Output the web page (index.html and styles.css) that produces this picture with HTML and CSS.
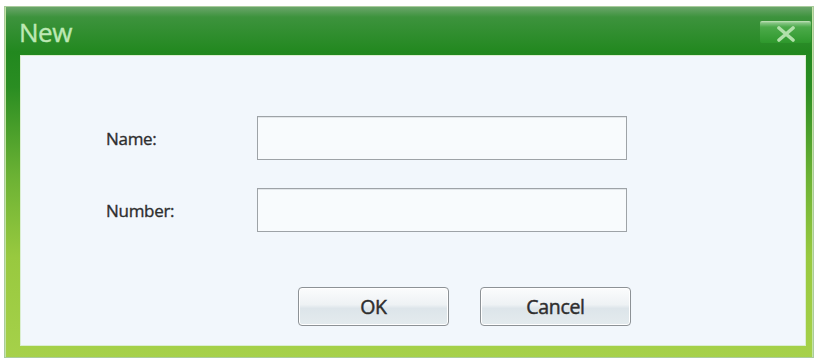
FILE: index.html
```html
<!DOCTYPE html>
<html>
<head>
<meta charset="utf-8">
<link rel="stylesheet" href="styles.css">
</head>
<body>
<div class="window">
  <div class="titlebar">
    <span class="title">New</span>
    <button class="close" aria-label="Close">
      <svg width="22" height="16" viewBox="0 0 22 16"><path d="M4 2 L18 14 M18 2 L4 14" stroke="#b2e0aa" stroke-width="3.6" stroke-linecap="round"/></svg>
    </button>
  </div>
  <div class="panel">
    <div class="form">
      <label class="label">Name:</label>
      <div class="field"></div>
      <label class="label">Number:</label>
      <div class="field"></div>
    </div>
    <div class="actions">
      <button class="btn">OK</button>
      <button class="btn">Cancel</button>
    </div>
  </div>
</div>
</body>
</html>
```
FILE: styles.css
```css
html, body {
  margin: 0;
  padding: 0;
  background: #ffffff;
}
body {
  padding: 6px 0 0 4px;
  font-family: "Open Sans", "Noto Sans", sans-serif;
}
.window {
  width: 810px;
  height: 352px;
  box-sizing: border-box;
  display: flex;
  flex-direction: column;
  padding: 0 7px 11px 15px;
  border: 1px solid #a9cc9c;
  background: linear-gradient(to bottom, #6aa56a 0px, #3d933d 10px, #22881f 45px, #2a8d22 80px, #6cb234 170px, #98c93f 250px, #a6d14a 352px);
  box-shadow: inset 1px 0 0 #c5e3a6, inset -1px 0 0 #c5e3a6;
}
.titlebar {
  height: 48px;
  flex: none;
  display: flex;
  align-items: flex-start;
  justify-content: space-between;
  margin-left: -15px;
  margin-right: -7px;
  padding-left: 14px;
  padding-right: 2px;
}
.title {
  font-size: 26px;
  line-height: 26px;
  margin-top: 12px;
  color: #bde8b4;
  letter-spacing: -0.5px;
  -webkit-text-stroke: 0.4px #bde8b4;
}
.close {
  margin-top: 14px;
  width: 51px;
  height: 22px;
  border: none;
  padding: 0;
  border-radius: 2px;
  background: linear-gradient(to bottom, #c8e4bf 0px, #86c584 2px, #4caa4a 6px, #2e982c 22px);
  display: flex;
  align-items: center;
  justify-content: center;
}
.close svg { display: block; margin-top: 3px; }
.panel {
  flex: 1;
  background: #f2f7fc;
  border: 1px solid #dbeed0;
}
.form {
  display: grid;
  grid-template-columns: 151px 370px;
  grid-auto-rows: 44px;
  row-gap: 28px;
  padding: 60px 0 0 85px;
  align-items: center;
}
.label {
  font-size: 17px;
  color: #2e2e2e;
  margin-top: 1px;
  letter-spacing: -0.3px;
  -webkit-text-stroke: 0.35px #2e2e2e;
}
.field {
  height: 44px;
  box-sizing: border-box;
  border: 1px solid #9ea3a7;
  box-shadow: inset 0 1px 0 #e2e6e9;
  background: #f8fbfd;
}
.actions {
  display: flex;
  gap: 31px;
  padding: 55px 0 0 277px;
}
.btn {
  width: 151px;
  height: 39px;
  box-sizing: border-box;
  border: 1px solid #8d9296;
  border-radius: 4px;
  background: linear-gradient(to bottom, #fbfcfd 0%, #eef2f4 45%, #dde5ea 55%, #e4ebee 100%);
  box-shadow: inset 0 0 0 1px #ffffff;
  font-family: "Open Sans", "Noto Sans", sans-serif;
  font-size: 19.5px;
  color: #2e2e2e;
  padding: 0;
  letter-spacing: -0.3px;
  -webkit-text-stroke: 0.45px #2e2e2e;
}
```
